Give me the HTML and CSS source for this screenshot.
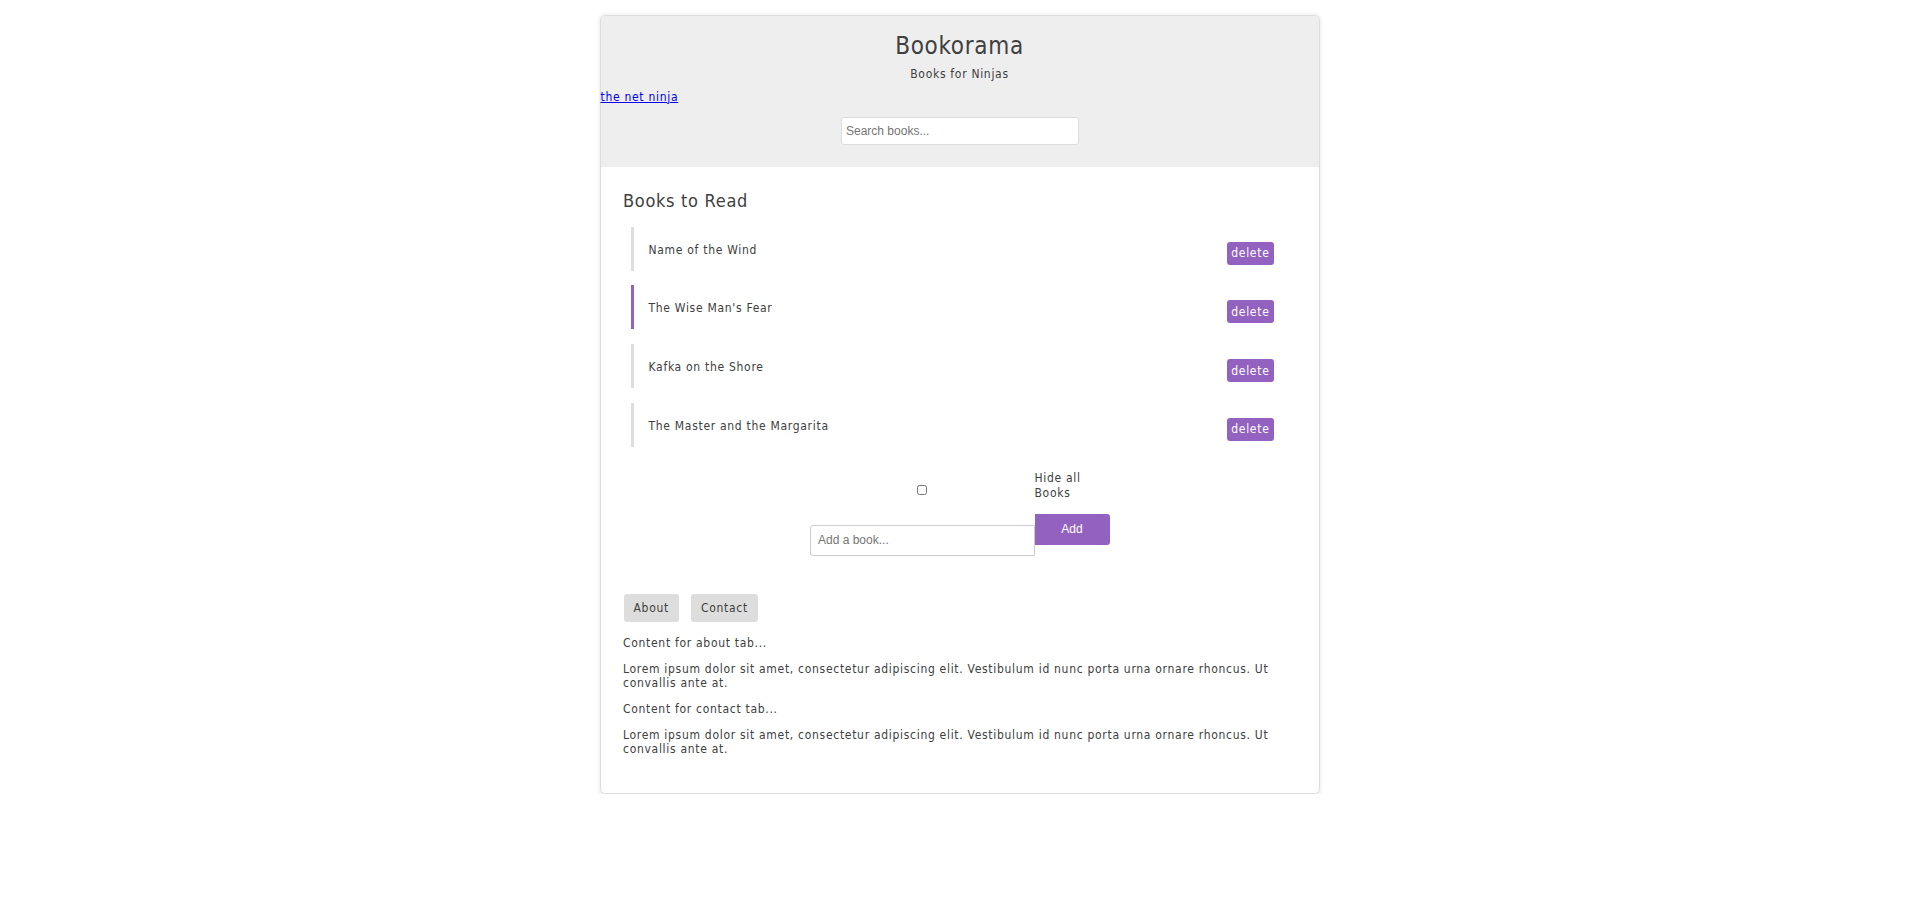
FILE: index.html
```html
<!DOCTYPE html>
<html lang="en">
<head>
<meta charset="utf-8">
<title>Bookorama</title>
<link rel="stylesheet" href="styles.css">
</head>
<body>
<div class="wrapper">
  <header class="banner">
    <h1 class="title">Bookorama</h1>
    <p class="subtitle">Books for Ninjas</p>
    <a class="ninja-link" href="#">the net ninja</a>
    <form class="search">
      <input class="search-input" type="text" placeholder="Search books...">
    </form>
  </header>
  <main class="content">
    <section class="book-list">
      <h2 class="list-title">Books to Read</h2>
      <ul class="books">
        <li class="book"><span class="delete">delete</span><span class="name">Name of the Wind</span></li>
        <li class="book book-active"><span class="delete">delete</span><span class="name">The Wise Man's Fear</span></li>
        <li class="book"><span class="delete">delete</span><span class="name">Kafka on the Shore</span></li>
        <li class="book"><span class="delete">delete</span><span class="name">The Master and the Margarita</span></li>
      </ul>
    </section>
    <form class="add-book">
      <div class="hide-cell"><input class="hide-box" type="checkbox" id="hide"></div>
      <label class="hide-label" for="hide">Hide all Books</label>
      <input class="add-input" type="text" placeholder="Add a book...">
      <button class="add-btn" type="button">Add</button>
    </form>
    <div class="tabbed">
      <ul class="tabs">
        <li class="tab">About</li>
        <li class="tab">Contact</li>
      </ul>
      <div class="panel">
        <p class="para">Content for about tab...</p>
        <p class="para">Lorem ipsum dolor sit amet, consectetur adipiscing elit. Vestibulum id nunc porta urna ornare rhoncus. Ut convallis ante at.</p>
      </div>
      <div class="panel">
        <p class="para">Content for contact tab...</p>
        <p class="para">Lorem ipsum dolor sit amet, consectetur adipiscing elit. Vestibulum id nunc porta urna ornare rhoncus. Ut convallis ante at.</p>
      </div>
    </div>
  </main>
</div>
</body>
</html>
```

FILE: styles.css
```css
* {
  box-sizing: border-box;
}

body {
  margin: 0;
  background: #fff;
  font-family: "DejaVu Sans Condensed", "DejaVu Sans", sans-serif;
  font-size: 12px;
  line-height: 14px;
  letter-spacing: 0.7px;
  color: #404040;
}

.wrapper {
  width: 720px;
  margin: 15px auto 0;
  border: 1px solid #ddd;
  border-radius: 4.5px;
  box-shadow: 0 0.75px 4.5px rgba(0, 0, 0, 0.12);
  padding-bottom: 36.4px;
}

.banner {
  background: #eee;
  border-radius: 3.5px 3.5px 0 0;
  padding: 7.5px 0 22.5px;
  display: flex;
  flex-direction: column;
}

.title {
  margin: 8px 0 0;
  font-size: 24px;
  line-height: 28px;
  font-weight: normal;
  text-align: center;
}

.subtitle {
  margin: 7.5px 0 0;
  text-align: center;
}

.ninja-link {
  align-self: flex-start;
  margin-top: 8.5px;
  color: #0000ee;
  text-decoration: underline;
}

.search {
  align-self: center;
  margin: 13.2px 0 0;
}

.search-input {
  display: block;
  width: 238px;
  height: 28px;
  padding: 0 4.5px;
  border: 1px solid #ddd;
  border-radius: 3px;
  background: #fff;
  font-family: "Liberation Sans", Arial, sans-serif;
  font-size: 12px;
  letter-spacing: 0;
  color: #444;
}

.search-input::placeholder,
.add-input::placeholder {
  color: #757575;
}

.content {
  padding: 0 22.5px;
}

.list-title {
  margin: 23.3px 0 0;
  font-size: 18px;
  line-height: 22px;
  font-weight: normal;
}

.books {
  list-style: none;
  margin: 14.2px 0 0;
  padding: 0;
  display: flex;
  flex-direction: column;
  gap: 14.75px;
}

.book {
  margin: 0 7.5px;
  padding: 15px;
  height: 44px;
  border-left: 3px solid #ddd;
}

.book-active {
  border-left-color: #9361bf;
}

.name {
  position: relative;
  top: 1px;
}

.delete {
  float: right;
  padding: 4.5px 4px;
  border-radius: 3px;
  background: #9361bf;
  color: #fff;
}

.add-book {
  width: 300px;
  margin: 24.4px auto 0;
  display: grid;
  grid-template-columns: 225px 75px;
  align-items: start;
}

.hide-cell {
  display: flex;
  justify-content: center;
  padding-top: 13.2px;
}

.hide-box {
  width: 10px;
  height: 10px;
  margin: 0;
}

.hide-label {
  display: block;
  line-height: 14.5px;
}

.add-input {
  margin-top: 24.8px;
  width: 225px;
  height: 30.5px;
  padding: 0 7.5px;
  border: 1px solid #ccc;
  border-radius: 3px 0 0 3px;
  font-family: "Liberation Sans", Arial, sans-serif;
  font-size: 12px;
  letter-spacing: 0;
  color: #444;
}

.add-btn {
  margin-top: 13.8px;
  width: 75px;
  height: 30.5px;
  padding: 0;
  border: none;
  border-radius: 0 3px 3px 0;
  background: #9361bf;
  color: #fff;
  font-family: "Liberation Sans", Arial, sans-serif;
  font-size: 12px;
  letter-spacing: 0;
}

.tabbed {
  margin-top: 38.6px;
}

.tabs {
  list-style: none;
  margin: 0;
  padding: 0 0 0 0.5px;
  display: flex;
  gap: 12px;
}

.tab {
  height: 28px;
  padding: 0 10px;
  display: flex;
  align-items: center;
  border-radius: 3px;
  background: #ddd;
}

.panel {
  margin-top: 14px;
  display: flex;
  flex-direction: column;
  gap: 12px;
}

.panel + .panel {
  margin-top: 12px;
}

.para {
  margin: 0;
}
```
